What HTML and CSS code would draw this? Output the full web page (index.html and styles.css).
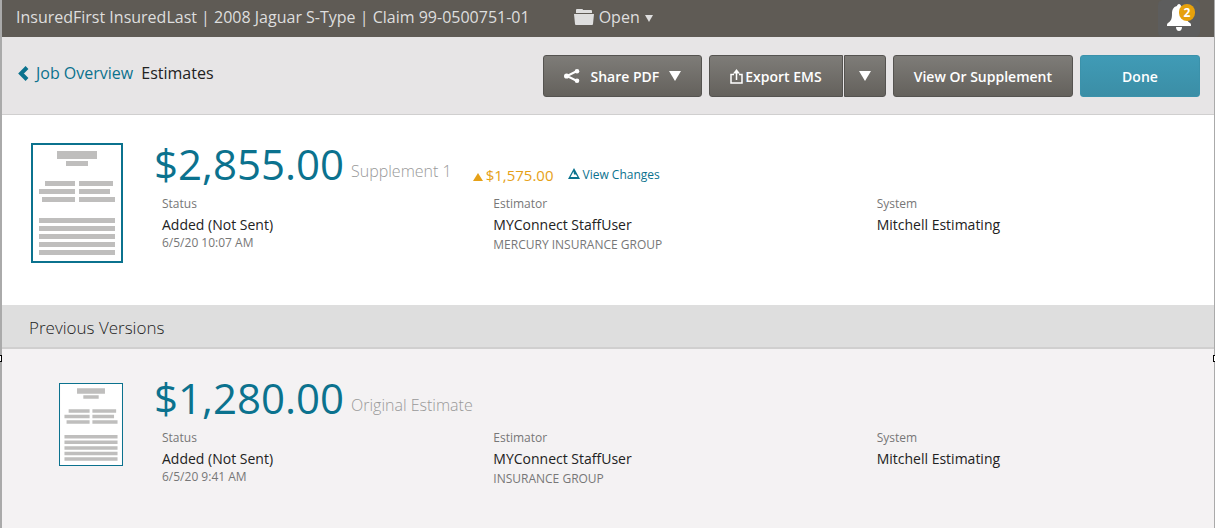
FILE: index.html
```
<!DOCTYPE html>
<html lang="en">
<head>
  <meta charset="UTF-8">
  <meta name="viewport" content="width=device-width, initial-scale=1.0">
  <title>Estimates</title>
  <link rel="stylesheet" href="styles.css">
</head>
<body>
  <svg class="defs" width="0" height="0" aria-hidden="true">
    <symbol id="doc" viewBox="0 0 88 116">
      <rect width="88" height="116" fill="#fff"/>
      <path fill="#bfbebd" d="M24 6h40v8H24zM33 16h22v5H33zM12 36h30v5H12zM46 36h34v5H46zM6 44h36v5H6zM46 44h31v5H46zM9 52h33v5H9zM46 52h36v5H46zM6 73h76v5H6zM6 81h76v5H6zM6 89h76v5H6zM6 97h76v5H6zM6 105h76v5H6z"/>
    </symbol>
  </svg>

  <div class="page">
    <header class="topbar">
      <span class="claim">InsuredFirst InsuredLast | 2008 Jaguar S-Type | Claim 99-0500751-01</span>
      <button type="button" class="open-menu">
        <svg width="20" height="16" viewBox="0 0 20 16"><path fill="#dedede" d="M2 4V1q0-1 1-1h5q1 0 1 1h8q1 0 1 1v2zM0 5h20l-1 10q0 1-1 1H2q-1 0-1-1z"/></svg>
        <span>Open</span>
        <svg class="caret" width="8" height="7" viewBox="0 0 8 7"><path fill="#dedede" d="M0 0h8L4 7z"/></svg>
      </button>
      <button type="button" class="bell" aria-label="Notifications">
        <svg width="24" height="27" viewBox="0 0 24 27"><path fill="#fff" d="M12 0c1 0 2 1 2 2 4 1 5 4 5 8 0 5 1 7 4 9 1 1 1 1 1 3H0c0-2 0-2 1-3 3-2 4-4 4-9 0-4 1-7 5-8 0-1 1-2 2-2zM9 23h6c0 2-1 4-3 4s-3-2-3-4z"/></svg>
        <span class="badge">2</span>
      </button>
    </header>

    <div class="toolbar">
      <nav class="crumbs">
        <a href="#"><svg width="11" height="15" viewBox="0 0 11 15"><path fill="none" stroke="#0b728e" stroke-width="4" d="M9 1.5L3 7.5l6 6"/></svg>Job Overview</a>
        <span>Estimates</span>
      </nav>
      <div class="actions">
        <button type="button" class="btn btn-share">
          <svg width="16" height="14" viewBox="0 0 16 14"><path fill="none" stroke="#fff" stroke-width="2" d="M13 2L3 7l10 5"/><circle cx="13" cy="2.3" r="2.3" fill="#fff"/><circle cx="2.6" cy="7" r="2.6" fill="#fff"/><circle cx="13" cy="11.7" r="2.3" fill="#fff"/></svg>
          <span>Share PDF</span>
          <svg width="12" height="10" viewBox="0 0 12 10"><path fill="#fff" d="M0 0h12L6 10z"/></svg>
        </button>
        <div class="split">
          <button type="button" class="btn btn-export">
            <svg width="13" height="15" viewBox="0 0 13 15"><path fill="none" stroke="#fff" stroke-width="1.5" d="M4 5.500H1v8.500h11V5.500H9M6.500 11V2"/><path fill="#fff" d="M6.500 0L10 4.500H3z"/></svg>
            <span>Export EMS</span>
          </button>
          <button type="button" class="btn btn-caret" aria-label="More export options">
            <svg width="12" height="10" viewBox="0 0 12 10"><path fill="#fff" d="M0 0h12L6 10z"/></svg>
          </button>
        </div>
        <button type="button" class="btn">View Or Supplement</button>
        <button type="button" class="btn btn-done">Done</button>
      </div>
    </div>

    <section class="estimate">
      <div class="thumb"><svg class="doc"><use href="#doc"/></svg></div>
      <div class="info">
        <div class="headline">
          <span class="amount">$2,855.00</span>
          <span class="kind">Supplement 1</span>
          <span class="delta"><svg width="10" height="8" viewBox="0 0 10 8"><path fill="#e6a117" d="M5 0l5 8H0z"/></svg>$1,575.00</span>
          <a href="#" class="changes"><svg width="12" height="11" viewBox="0 0 12 11"><path fill="#0b728e" fill-rule="evenodd" d="M6 0l6 11H0zM5.500 3.500L2.500 9h7L8 6.500H6z"/></svg>View Changes</a>
        </div>
        <dl class="details">
          <div>
            <dt>Status</dt>
            <dd>Added (Not Sent)</dd>
            <dd class="date">6/5/20 10:07 AM</dd>
          </div>
          <div>
            <dt>Estimator</dt>
            <dd>MYConnect StaffUser</dd>
            <dd class="company">MERCURY INSURANCE GROUP</dd>
          </div>
          <div>
            <dt>System</dt>
            <dd>Mitchell Estimating</dd>
          </div>
        </dl>
      </div>
    </section>

    <h2 class="previous">Previous Versions</h2>

    <section class="estimate older">
      <div class="thumb"><svg class="doc"><use href="#doc"/></svg></div>
      <div class="info">
        <div class="headline">
          <span class="amount">$1,280.00</span>
          <span class="kind">Original Estimate</span>
        </div>
        <dl class="details">
          <div>
            <dt>Status</dt>
            <dd>Added (Not Sent)</dd>
            <dd class="date">6/5/20 9:41 AM</dd>
          </div>
          <div>
            <dt>Estimator</dt>
            <dd>MYConnect StaffUser</dd>
            <dd class="company">INSURANCE GROUP</dd>
          </div>
          <div>
            <dt>System</dt>
            <dd>Mitchell Estimating</dd>
          </div>
        </dl>
      </div>
    </section>
    <i class="handle handle-left"></i>
    <i class="handle handle-right"></i>
  </div>
</body>
</html>
```
FILE: styles.css
```
* { box-sizing: border-box; }
body {
  margin: 0;
  font-family: "Open Sans", sans-serif;
  font-size: 14px;
  color: #222;
}
button { font-family: inherit; cursor: pointer; }
a { color: #0b728e; text-decoration: none; }
svg { flex: none; }
.defs { position: absolute; }

.page {
  position: relative;
  display: flex;
  flex-direction: column;
  min-height: 100vh;
  border-left: 2px solid #aaa;
  border-right: 1px solid #aaa;
  background: #f4f2f3;
}

/* Top bar */
.topbar {
  display: flex;
  align-items: center;
  height: 37px;
  padding: 0 14px;
  background: #5f5b55;
  color: #dedede;
  font-size: 16px;
}
.claim { padding-bottom: 4px; }
.open-menu {
  display: flex;
  align-items: center;
  gap: 5px;
  margin-left: 44px;
  padding: 0 0 4px;
  border: 0;
  background: none;
  color: inherit;
  font-size: 16px;
}
.caret { margin-top: 3px; }
.bell {
  position: relative;
  width: 42px;
  height: 37px;
  margin-left: auto;
  padding: 0 0 2px;
  border: 0;
  border-radius: 5px;
  background: #5d5d5d;
}
.bell svg { display: block; margin: 0 auto; }
.badge {
  position: absolute;
  top: 4px;
  right: 5px;
  width: 16px;
  height: 17px;
  border-radius: 8px;
  background: #e6a10c;
  color: #fff;
  font-size: 12px;
  font-weight: 700;
  line-height: 17px;
  text-align: center;
}

/* Toolbar */
.toolbar {
  display: flex;
  justify-content: space-between;
  padding: 18px 14px 17px 16px;
  border-bottom: 1px solid #d0cfcf;
  background: #e7e5e6;
}
.crumbs {
  display: flex;
  align-items: flex-start;
  gap: 8px;
  font-size: 16px;
  line-height: 36px;
}
.crumbs a { display: flex; align-items: center; gap: 7px; }
.actions { display: flex; gap: 7px; }
.split { display: flex; gap: 1px; }
.btn {
  display: flex;
  align-items: center;
  justify-content: center;
  height: 42px;
  padding: 0 20px;
  border: 1px solid #555350;
  border-radius: 3px;
  background: linear-gradient(#7e7c78, #64615c);
  color: #fff;
  font-size: 14px;
  font-weight: 600;
}
.btn-share { gap: 10px; }
.btn-export { gap: 2px; border-radius: 3px 0 0 3px; }
.btn-caret { width: 42px; padding: 0; border-radius: 0 3px 3px 0; }
.btn-done {
  width: 120px;
  border-color: #3b92ab;
  background: linear-gradient(#409bb6, #3b8ea6);
}

/* Estimates */
.estimate {
  display: flex;
  padding: 28px 14px 42px 29px;
  background: #fff;
}
.thumb { width: 92px; height: 120px; }
.doc {
  display: block;
  width: 92px;
  height: 120px;
  margin-left: auto;
  border: 2px solid #0b728e;
}
.info { flex: 1; margin-left: 31px; }
.headline {
  display: flex;
  align-items: flex-start;
  height: 52px;
  line-height: 42px;
}
.amount { color: #0b728e; font-size: 42px; }
.kind {
  margin-left: 7px;
  padding-top: 7px;
  color: #999;
  font-size: 16px;
  font-weight: 300;
}
.delta, .changes { padding-top: 11px; }
.delta { margin-left: 21px; color: #e6a117; font-size: 15px; }
.delta svg { margin-right: 3px; }
.changes { margin-left: 14px; font-size: 12px; }
.changes svg { margin-right: 3px; }
.details {
  display: grid;
  grid-template-columns: 331fr 383fr 323fr;
  margin: 0;
  padding-left: 8px;
}
dt { color: #777; font-size: 12px; line-height: 18px; }
dd { margin: 0; padding-top: 2px; line-height: 20px; }
.date, .company { padding: 0; color: #777; font-size: 12px; line-height: 16px; }
.company { padding-top: 2px; }

.previous {
  margin: 0;
  padding: 3px 27px 0;
  border-bottom: 2px solid #d0cfcf;
  background: #dedede;
  font-size: 17px;
  font-weight: 300;
  line-height: 39px;
}
.older { background: none; }
.older .thumb { padding-top: 6px; }
.older .doc { width: 64px; height: 83px; border-width: 1px; }

/* Resize handles on the frame edges */
.handle {
  position: absolute;
  top: 355px;
  width: 2px;
  height: 7px;
  border: 1px solid #000;
  background: #fff;
}
.handle-left { left: -2px; border-left: 0; }
.handle-right { right: -1px; border-right: 0; }
```
